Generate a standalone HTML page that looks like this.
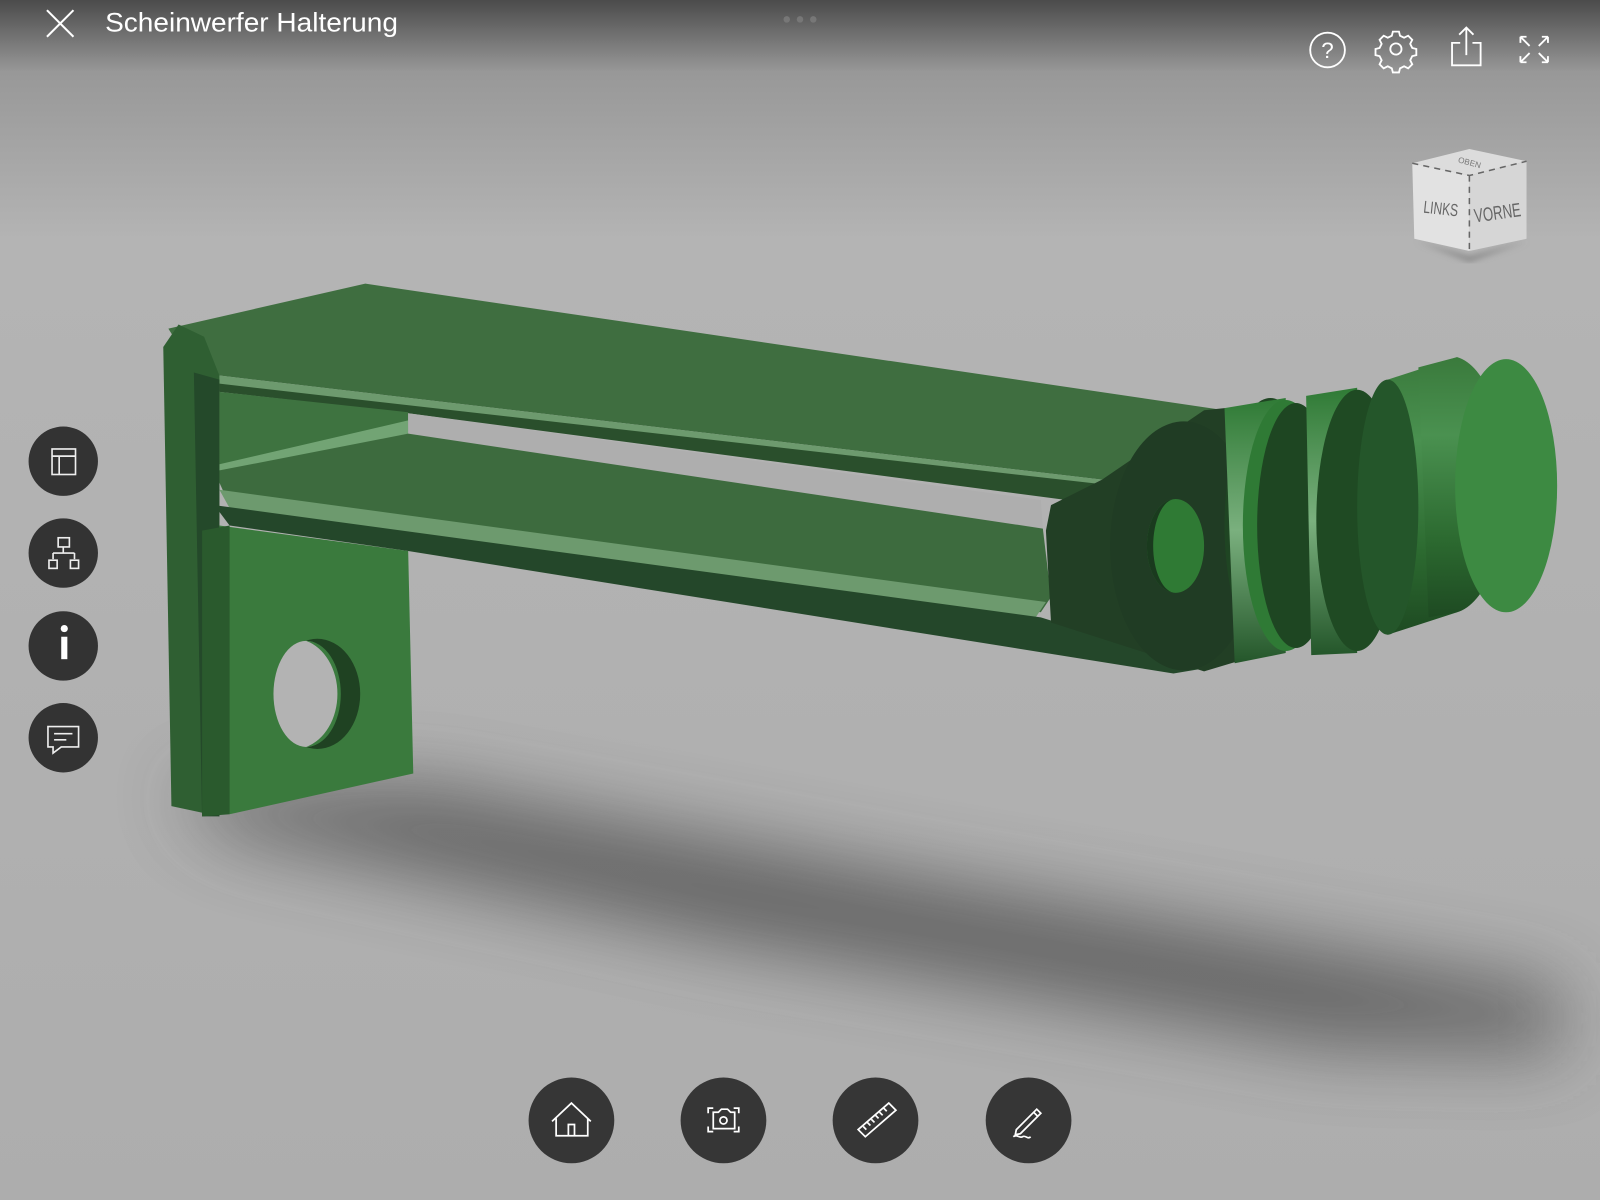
<!DOCTYPE html>
<html><head><meta charset="utf-8">
<style>
html,body{margin:0;padding:0;width:1600px;height:1200px;overflow:hidden;background:#b0b0b0}
svg{display:block}
</style></head>
<body>
<svg width="1600" height="1200" viewBox="0 0 1568 1176" xmlns="http://www.w3.org/2000/svg" font-family="Liberation Sans, sans-serif">
<defs>
<linearGradient id="bg" x1="0" y1="0" x2="0" y2="1">
<stop offset="0" stop-color="#4b4b4b"/>
<stop offset="0.06" stop-color="#989898"/>
<stop offset="0.2" stop-color="#b4b4b4"/>
<stop offset="1" stop-color="#adadad"/>
</linearGradient>
<filter id="blur" filterUnits="userSpaceOnUse" x="0" y="600" width="1568" height="576"><feGaussianBlur stdDeviation="36"/></filter>
<filter id="b2"><feGaussianBlur stdDeviation="3"/></filter>
<linearGradient id="cyl" x1="0" y1="0" x2="0" y2="1">
<stop offset="0" stop-color="#3a7a3c"/>
<stop offset="0.3" stop-color="#4a9150"/>
<stop offset="0.7" stop-color="#2c6a30"/>
<stop offset="1" stop-color="#1e4a22"/>
</linearGradient>
<linearGradient id="ring" x1="0" y1="0" x2="0" y2="1">
<stop offset="0" stop-color="#2f7a35"/>
<stop offset="0.5" stop-color="#7ab07e"/>
<stop offset="1" stop-color="#24562a"/>
</linearGradient>
</defs>
<rect width="1568" height="1176" fill="url(#bg)"/>
<!-- shadow -->
<g filter="url(#blur)" opacity="0.7">
<polygon points="170,770 420,770 900,860 1530,970 1530,1030 1300,1025 700,920 220,815" fill="#444"/>
</g>

<!-- upper arm top surface -->
<polygon points="165,322 358,278 1200,402 1180,420 1080,470 215,368 190,362" fill="#3f6e40"/>
<polygon points="190,362 215,368 1080,470 1070,475 215,378" fill="#6d9a6e"/>
<polygon points="215,376 1075,474 1060,492 400,405 215,384" fill="#2a4f2c"/>
<polygon points="215,384 400,404 400,425 215,460" fill="#3e7340"/>
<polygon points="215,455 400,412 400,425 215,468" fill="#72a474"/>
<polygon points="400,405 1020,490 1022,518 400,425" fill="#aeaeae"/>
<polygon points="210,462 400,425 1022,518 1030,585 1020,600 225,495" fill="#3d6b3e"/>
<polygon points="215,480 1025,590 1015,605 225,498" fill="#6d9a6e"/>
<polygon points="210,495 1020,605 1180,655 1150,660 400,540 225,515" fill="#24472a"/>
<polygon points="160,340 175,318 200,330 215,368 215,800 168,790" fill="#2f5f32"/>
<polygon points="190,365 215,372 215,800 198,800" fill="#24492a"/>
<polygon points="215,515 400,540 405,758 225,798" fill="#3a7a3d"/>
<polygon points="198,520 225,515 225,798 198,800" fill="#2a5a2d"/>
<ellipse cx="311" cy="680" rx="42" ry="54" fill="#1f4222"/>
<ellipse cx="300" cy="680" rx="32" ry="52" fill="#b3b3b3"/>
<path d="M300,628 A34,52 0 0 1 300,732 A42,54 0 0 0 300,628Z" fill="#3b7b3f"/>

<!-- right end -->
<polygon points="1030,495 1080,470 1180,402 1200,400 1240,420 1240,640 1180,658 1030,610 1025,520" fill="#223f25"/>
<ellipse cx="1160" cy="535" rx="72" ry="122" fill="#203c24"/>
<ellipse cx="1152" cy="535" rx="28" ry="46" fill="#2f7a34"/>
<path d="M1152,489 A28,46 0 0 0 1152,581 A20,42 0 0 1 1152,489Z" fill="#1a3a1e"/>
<ellipse cx="1245" cy="515" rx="45" ry="125" fill="#1f4523"/>
<path d="M1200,400 L1260,390 L1260,640 L1210,650 Z" fill="url(#ring)"/>
<ellipse cx="1260" cy="515" rx="42" ry="123" fill="#2f7a35"/>
<ellipse cx="1270" cy="515" rx="38" ry="120" fill="#1e4622"/>
<path d="M1280,388 L1330,380 L1330,640 L1285,642 Z" fill="url(#ring)"/>
<ellipse cx="1330" cy="510" rx="40" ry="128" fill="#1f4a23"/>
<path d="M1360,372 L1428,350 L1428,600 L1360,622 Z" fill="url(#cyl)"/>
<ellipse cx="1360" cy="497" rx="30" ry="125" fill="#24562a"/>
<path d="M1428,350 A56,126 0 0 1 1428,600 L1400,605 L1390,360 Z" fill="url(#cyl)"/>
<ellipse cx="1476" cy="476" rx="50" ry="124" fill="#3d8a42"/>

<!-- view cube -->
<g>
<polygon points="1388,236 1440,252 1497,236 1440,256" fill="#777" filter="url(#b2)"/>
<polygon points="1384,160 1440,146 1496,158 1440,172" fill="#dcdcdc"/>
<polygon points="1384,160 1440,172 1440,246 1386,234" fill="#e2e2e2"/>
<polygon points="1440,172 1496,158 1496,234 1440,246" fill="#d6d6d6"/>
<path d="M1384,160 L1440,172 L1496,158 M1440,172 L1440,246" stroke="#666" stroke-width="1.5" stroke-dasharray="6,5" fill="none"/>
<text x="1395" y="210" font-size="17" fill="#666" textLength="34" lengthAdjust="spacingAndGlyphs" transform="rotate(6 1410 205)">LINKS</text>
<text x="1444" y="215" font-size="19" fill="#666" textLength="46" lengthAdjust="spacingAndGlyphs" transform="rotate(-8 1467 205)">VORNE</text>
<text x="1440" y="162" font-size="8" fill="#777" text-anchor="middle" transform="rotate(15 1440 160)">OBEN</text>
</g>

<!-- top bar -->
<path d="M46,10 L72,36 M72,10 L46,36" stroke="#fff" stroke-width="2"/>
<text x="103" y="31" font-size="26" fill="#fff" textLength="287" lengthAdjust="spacingAndGlyphs">Scheinwerfer Halterung</text>
<circle cx="771" cy="19" r="3.2" fill="#777"/><circle cx="784" cy="19" r="3.2" fill="#777"/><circle cx="797" cy="19" r="3.2" fill="#777"/>
<g stroke="#fff" stroke-width="1.8" fill="none">
<circle cx="1301" cy="49" r="17"/>
<text x="1301" y="57" font-size="22" fill="#fff" stroke="none" text-anchor="middle">?</text>
<circle cx="1368" cy="48" r="5.5"/>
<path d="M1365,31 h6 l1,4 l4,2 l4,-2 l4,4 l-2,4 l2,4 l4,1 v6 l-4,1 l-2,4 l2,4 l-4,4 l-4,-2 l-4,2 l-1,4 h-6 l-1,-4 l-4,-2 l-4,2 l-4,-4 l2,-4 l-2,-4 l-4,-1 v-6 l4,-1 l2,-4 l-2,-4 l4,-4 l4,2 l4,-2 z"/>
<path d="M1431,42 h-8 v22 h28 v-22 h-8 M1437,54 v-26 M1430,34 l7,-7 l7,7"/>
<path d="M1490,36 l9,9 M1490,36 v6 M1490,36 h6 M1517,36 l-9,9 M1517,36 v6 M1517,36 h-6 M1490,61 l9,-9 M1490,61 v-6 M1490,61 h6 M1517,61 l-9,-9 M1517,61 v-6 M1517,61 h-6"/>
</g>

<!-- left buttons -->
<g fill="#333"><circle cx="62" cy="452" r="34"/><circle cx="62" cy="542" r="34"/><circle cx="62" cy="633" r="34"/><circle cx="62" cy="723" r="34"/></g>
<g stroke="#eee" stroke-width="1.6" fill="none">
<rect x="51" y="440" width="23" height="25"/><path d="M51,447 h23 M58,447 v18"/>
<rect x="57" y="527" width="11" height="9"/><path d="M62,536 v6 M52,542 h21 M52,542 v6 M73,542 v6"/><rect x="48" y="549" width="8" height="8"/><rect x="69" y="549" width="8" height="8"/>
<path d="M47,712 h30 v20 h-17 l-8,6 v-6 h-5 z M53,719 h18 M53,725 h12"/>
</g>
<circle cx="63" cy="616" r="3.5" fill="#fff"/><rect x="60" y="624" width="6" height="22" fill="#fff"/>

<!-- bottom buttons -->
<g fill="#363636"><circle cx="560" cy="1098" r="42"/><circle cx="709" cy="1098" r="42"/><circle cx="858" cy="1098" r="42"/><circle cx="1008" cy="1098" r="42"/></g>
<g stroke="#fff" stroke-width="1.7" fill="none">
<path d="M541,1099 L560,1081 L579,1099 M545,1096 v17 h31 v-17 M557,1113 v-11 h6 v11"/>
<path d="M694,1091 v-5 h5 M724,1091 v-5 h-5 M694,1104 v5 h5 M724,1104 v5 h-5"/>
<path d="M699,1090 h5 l3,-3 h6 l3,3 h4 v16 h-21 z"/><circle cx="709" cy="1098" r="3.5"/>
<path d="M841,1107 l30,-26 l7,7 l-30,26 z M846,1104 l3,3 M850,1100 l3,3 M854,1097 l3,3 M858,1093 l3,3 M862,1090 l3,3 M866,1086 l3,3"/>
<path d="M996,1107 l20,-20 l4,4 l-20,20 l-5,1 z M1013,1090 l4,4 M993,1114 c4,-3 6,2 9,0 c3,-2 5,3 8,0"/>
</g>
</svg>
</body></html>
